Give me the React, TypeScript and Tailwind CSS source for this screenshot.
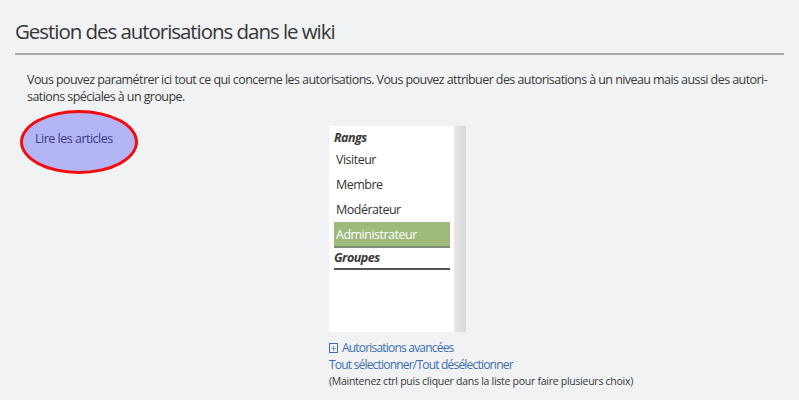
import { useState } from 'react'

const ranks = ['Visiteur', 'Membre', 'Modérateur', 'Administrateur']

export default function App() {
  const [selected, setSelected] = useState('Administrateur')

  return (
    <div className="w-[799px] h-[400px] overflow-hidden bg-[#f1f2f4] text-[#333] font-['Open_Sans',sans-serif]">
      <div className="px-[15px] pt-[17px]">
        <h1 className="text-[20.5px] leading-[28px] tracking-[-1.05px] text-[#363636] pb-[8px] border-b-2 border-[#a9a9a9]">
          Gestion des autorisations dans le wiki
        </h1>

        <p className="mt-[16px] ml-[12px] pr-[5px] text-[12.5px] leading-[17px] tracking-[-0.57px] text-[#3a3a3a] whitespace-nowrap">
          Vous pouvez paramétrer ici tout ce qui concerne les autorisations. Vous pouvez attribuer des autorisations à un niveau mais aussi des autori-
          <br />
          sations spéciales à un groupe.
        </p>

        <div className="flex mt-[5px]">
          <div className="w-[314px] shrink-0 pl-[5px]">
            <div className="w-[118px] h-[64px] rounded-[50%] bg-[#b3b5f4] border-[3px] border-[#f20d0d] flex pt-[17px] pl-[12px]">
              <span className="text-[12.5px] leading-[17px] tracking-[-0.5px] text-[#3b3b86]">Lire les articles</span>
            </div>
          </div>

          <div className="pt-[16px]">
            <div className="w-[137px] h-[206px] bg-white flex">
              <div className="flex-1 pl-[5px] pr-[4px] pt-[3px] text-[12.5px] tracking-[-0.5px]">
                <div className="italic font-bold leading-[18px] text-[#3a3a3a]">Rangs</div>
                {ranks.map((r) => (
                  <div
                    key={r}
                    onClick={() => setSelected(r)}
                    className={
                      r === selected
                        ? 'h-[26px] leading-[25px] pl-[2px] bg-[#9db97b] text-white border-b-2 border-[#7f8a72]'
                        : 'h-[25px] leading-[25px] pl-[2px] text-[#333]'
                    }
                  >
                    {r}
                  </div>
                ))}
                <div className="italic font-bold leading-[18px] mt-[1px] pb-[1px] text-[#3a3a3a] border-b-2 border-[#555]">Groupes</div>
              </div>
              <div className="w-[12px] bg-gradient-to-r from-[#e4e4e4] to-[#d9d9d9] border-l border-[#ececec]" />
            </div>

            <div className="mt-[7px] text-[12px] leading-[17px] tracking-[-0.8px] text-[#3c6fb0]">
              <div className="flex items-center gap-[4px]">
                <span className="w-[9px] h-[10px] border border-[#3c6fb0] flex items-center justify-center text-[10px] leading-none tracking-normal">+</span>
                <span>Autorisations avancées</span>
              </div>
              <div>Tout sélectionner/Tout désélectionner</div>
            </div>
            <div className="text-[10.5px] leading-[17px] tracking-[-0.27px] text-[#3a3a3a]">
              (Maintenez ctrl puis cliquer dans la liste pour faire plusieurs choix)
            </div>
          </div>
        </div>
      </div>
    </div>
  )
}
